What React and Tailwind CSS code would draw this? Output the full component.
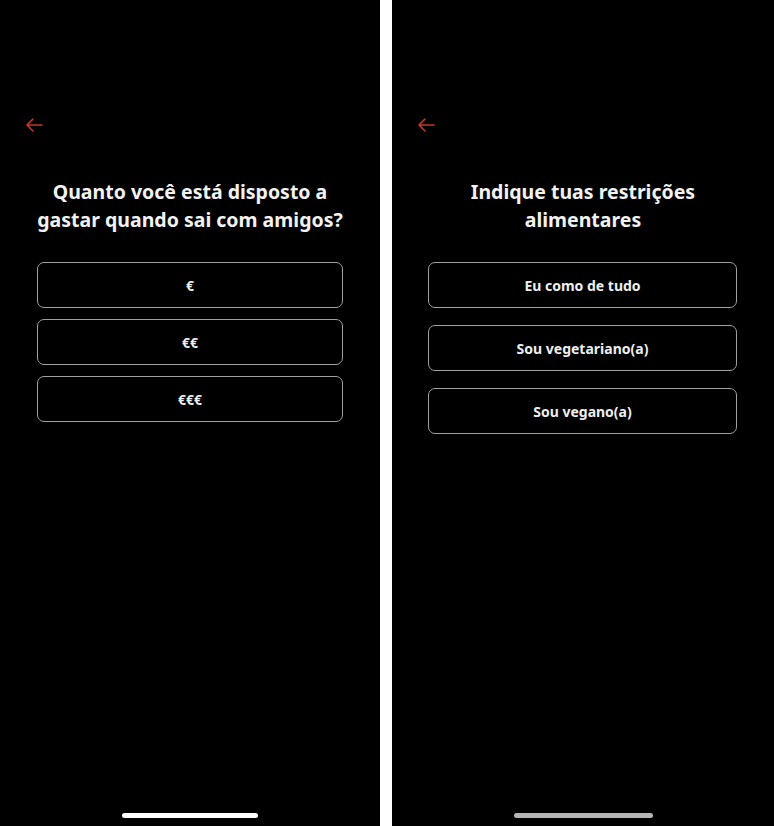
import React from "react";

function Arrow() {
  return (
    <svg width="20" height="18" viewBox="0 0 20 18" fill="none">
      <path d="M18 9H3M9 3L3 9l6 6" stroke="#c0392b" strokeWidth="1.6" strokeLinecap="round" strokeLinejoin="round" />
    </svg>
  );
}

function Panel({ title, options, gap, widthClass, padClass, barClass }) {
  return (
    <div className={`flex flex-col h-full ${widthClass} bg-black`}>
      <div className="pt-[116px] pl-[24px]">
        <Arrow />
      </div>
      <div className="mt-[44px] text-center text-[19.5px] leading-[28px] font-bold text-[#f2f2f2] px-2 whitespace-pre-line">
        {title}
      </div>
      <div className={`mt-[28px] ${padClass} flex flex-col ${gap}`}>
        {options.map((o) => (
          <div
            key={o}
            className="h-[46px] rounded-[7px] border-[1.5px] border-[#a0a0a0] flex items-center justify-center text-[14px] font-bold text-[#eeeeee]"
          >
            {o}
          </div>
        ))}
      </div>
      <div className="mt-auto mb-[8px] flex justify-center">
        <div className={barClass} />
      </div>
    </div>
  );
}

export default function App() {
  return (
    <div
      className="w-[774px] h-[826px] flex bg-black overflow-hidden"
      style={{ fontFamily: '"Noto Sans", "Open Sans", sans-serif' }}
    >
      <Panel
        widthClass="w-[380px]"
        padClass="px-[37px]"
        title={"Quanto você está disposto a\ngastar quando sai com amigos?"}
        options={["€", "€€", "€€€"]}
        gap="gap-[11px]"
        barClass="w-[136px] h-[5px] rounded-full bg-white"
      />
      <div className="w-[12px] h-full bg-white" />
      <Panel
        widthClass="w-[382px]"
        padClass="pl-[36px] pr-[37px]"
        title={"Indique tuas restrições\nalimentares"}
        options={["Eu como de tudo", "Sou vegetariano(a)", "Sou vegano(a)"]}
        gap="gap-[17px]"
        barClass="w-[139px] h-[5px] rounded-full bg-[#b5b5b5]"
      />
    </div>
  );
}
